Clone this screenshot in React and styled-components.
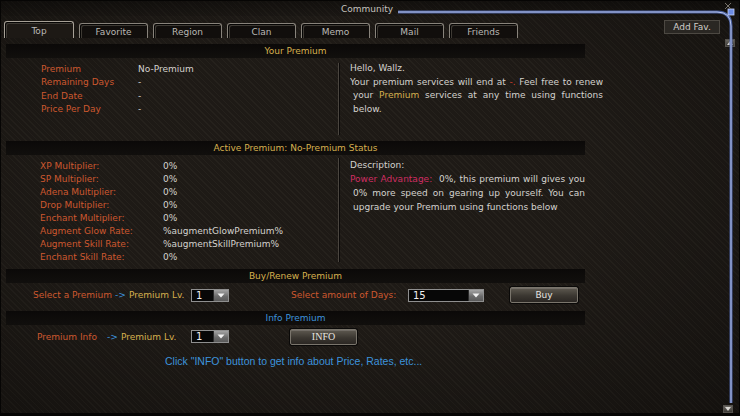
import React from 'react';
import styled, { createGlobalStyle } from 'styled-components';

const GlobalStyle = createGlobalStyle`
  html, body {
    margin: 0;
    padding: 0;
    background: #000;
  }
`;

const colors = {
  label: '#cd582f',
  value: '#d4d2ce',
  gold: '#d6b04e',
  red: '#c83a2a',
  pink: '#d02d62',
  blue: '#3d93dc',
};

const Window = styled.div`
  position: relative;
  width: 740px;
  height: 416px;
  box-sizing: border-box;
  overflow: hidden;
  display: flex;
  flex-direction: column;
  font-family: 'DejaVu Sans', 'Noto Sans', sans-serif;
  font-size: 9px;
  color: ${colors.value};
  border: 1px solid #060504;
  border-bottom-width: 3px;
  background:
    radial-gradient(ellipse at 45% 45%, rgba(0, 0, 0, 0) 45%, rgba(0, 0, 0, 0.35) 100%),
    repeating-linear-gradient(45deg, #1e1a16 0 2px, #25211c 2px 3px, #1e1a16 3px 4px);
`;

const TitleBar = styled.div`
  flex: none;
  height: 15px;
  display: flex;
  align-items: center;
  justify-content: center;
  padding-right: 6px;
  color: #c4c2be;
  background: linear-gradient(rgba(0, 0, 0, 0.35), rgba(0, 0, 0, 0.1));
`;

const TabBar = styled.div`
  flex: none;
  height: 22px;
  display: flex;
  align-items: flex-end;
  gap: 5px;
  padding: 0 19px 0 3px;
`;

const Tab = styled.div`
  width: ${(p) => (p.$active ? 70 : 69)}px;
  height: ${(p) => (p.$active ? 17 : 15)}px;
  box-sizing: border-box;
  border: 1px solid ${(p) => (p.$active ? '#a7a197' : '#88837b')};
  border-bottom: none;
  border-radius: 3px 3px 0 0;
  background: ${(p) => (p.$active ? '#1d1915' : '#110e0c')};
  box-shadow: inset 1px 1px 0 #050403, inset 2px 2px 0 #3e3a34;
  color: #bab8b4;
  display: flex;
  align-items: center;
  justify-content: center;
  padding-top: 1px;
`;

const AddFav = styled.div`
  margin-left: auto;
  align-self: flex-start;
  margin-top: 4px;
  width: 56px;
  height: 14px;
  box-sizing: border-box;
  border: 1px solid #4c4842;
  background: #2a2723;
  color: #cfcdc9;
  display: flex;
  align-items: center;
  justify-content: center;
`;

const Body = styled.div`
  flex: 1;
  display: flex;
  min-height: 0;
`;

const Content = styled.div`
  width: 579px;
  margin-left: 5px;
  padding-top: 6px;
  display: flex;
  flex-direction: column;
`;

const SectionHead = styled.div`
  height: 14px;
  line-height: 14px;
  text-align: center;
  background: linear-gradient(#0b0908, #110f0d);
  color: ${(p) => p.$color || colors.gold};
`;

const InfoBlock = styled.div`
  height: ${(p) => p.$h}px;
  display: grid;
  grid-template-columns: 332px 2px 1fr;
`;

const StatList = styled.div`
  display: grid;
  grid-template-columns: ${(p) => p.$labelW}px 1fr;
  grid-auto-rows: ${(p) => p.$lh}px;
  align-items: center;
  align-content: start;
  padding: ${(p) => p.$top}px 0 0 ${(p) => p.$left}px;
`;

const Label = styled.span`
  color: ${(p) => p.$color || colors.label};
  white-space: nowrap;
`;

const Value = styled.span`
  color: ${colors.value};
  white-space: nowrap;
`;

const Divider = styled.div`
  border-left: 1px solid #4a453f;
  border-right: 1px solid #0b0908;
  margin: ${(p) => p.$top}px 0 ${(p) => p.$bottom}px;
`;

const Para = styled.div`
  padding: ${(p) => p.$top}px 0 0 10px;
  width: ${(p) => p.$w}px;
  line-height: ${(p) => p.$lh}px;
`;

const Line = styled.div`
  white-space: ${(p) => (p.$justify ? 'normal' : 'pre')};
  text-align: ${(p) => (p.$justify ? 'justify' : 'left')};
  text-align-last: ${(p) => (p.$justify ? 'justify' : 'auto')};
  padding-left: ${(p) => p.$indent || 0}px;
  height: ${(p) => p.$lh}px;
  overflow: hidden;
`;

const Tint = styled.span`
  color: ${(p) => p.$color};
`;

const Row = styled.div`
  height: ${(p) => p.$h}px;
  box-sizing: border-box;
  padding-bottom: ${(p) => p.$pb || 0}px;
  display: grid;
  grid-template-columns: ${(p) => p.$cols};
  align-items: center;
`;

const Combo = styled.div`
  width: ${(p) => p.$w}px;
  height: 13px;
  box-sizing: border-box;
  border: 1px solid #8f8f8f;
  background: #070707;
  display: flex;
  align-items: stretch;
  color: #f2f2f2;
  font-size: 10px;
`;

const ComboValue = styled.span`
  flex: 1;
  padding-left: 4px;
  line-height: 11px;
`;

const ComboButton = styled.span`
  width: 14px;
  background: linear-gradient(#a3a3a3, #6a6a6a 60%, #5a5a5a);
  border-left: 1px solid #2a2a2a;
  display: flex;
  align-items: center;
  justify-content: center;
`;

const Button = styled.div`
  width: ${(p) => p.$w}px;
  height: 16px;
  box-sizing: border-box;
  border: 1px solid #7a756c;
  border-radius: 2px;
  background: linear-gradient(#5e5950, #3b3731 55%, #2b2723);
  box-shadow: inset 0 1px 0 rgba(255, 255, 255, 0.14), 0 0 0 1px #0a0908;
  color: #e6e4e0;
  display: flex;
  align-items: center;
  justify-content: center;
  font-family: ${(p) => (p.$serif ? "'Liberation Serif', serif" : 'inherit')};
  font-size: ${(p) => (p.$serif ? 10 : 9)}px;
`;

const Hint = styled.div`
  margin-top: 6px;
  padding-left: 159px;
  line-height: 14px;
  font-family: 'Liberation Sans', Arial, sans-serif;
  font-size: 10.5px;
  color: ${colors.blue};
`;

const Rail = styled.div`
  flex: 1;
  display: flex;
  flex-direction: column;
  align-items: flex-end;
  justify-content: space-between;
  padding: 1px 4px 0 0;
`;

const ScrollButton = styled.div`
  width: 10px;
  height: 8px;
  box-sizing: border-box;
  border: 1px solid #55524d;
  background: linear-gradient(#6a6762, #3a3834);
  display: flex;
  align-items: center;
  justify-content: center;
  margin-right: ${(p) => p.$mr || 0}px;
`;

const Frame = styled.svg`
  position: absolute;
  inset: 0;
  pointer-events: none;
`;

const Chevron = () => (
  <svg width="8" height="5" viewBox="0 0 8 5">
    <path d="M0.5 0.5 H7.5 L4 4.5 Z" fill="#f2f2f2" />
  </svg>
);

const Arrow = ({ up }) => (
  <svg width="6" height="4" viewBox="0 0 6 4">
    <path d={up ? 'M0 4 H6 L3 0 Z' : 'M0 0 H6 L3 4 Z'} fill="#d8d6d2" />
  </svg>
);

const tabs = ['Top', 'Favorite', 'Region', 'Clan', 'Memo', 'Mail', 'Friends'];

const premiumStats = [
  ['Premium', 'No-Premium'],
  ['Remaining Days', '-'],
  ['End Date', '-'],
  ['Price Per Day', '-'],
];

const activeStats = [
  ['XP Multiplier:', '0%'],
  ['SP Multiplier:', '0%'],
  ['Adena Multiplier:', '0%'],
  ['Drop Multiplier:', '0%'],
  ['Enchant Multiplier:', '0%'],
  ['Augment Glow Rate:', '%augmentGlowPremium%'],
  ['Augment Skill Rate:', '%augmentSkillPremium%'],
  ['Enchant Skill Rate:', '0%'],
];

const Select = ({ w, value }) => (
  <Combo $w={w}>
    <ComboValue>{value}</ComboValue>
    <ComboButton>
      <Chevron />
    </ComboButton>
  </Combo>
);

export default function App() {
  return (
    <>
      <GlobalStyle />
      <Window>
        <TitleBar>Community</TitleBar>
        <TabBar>
          {tabs.map((t, i) => (
            <Tab key={t} $active={i === 0}>
              {t}
            </Tab>
          ))}
          <AddFav>Add Fav.</AddFav>
        </TabBar>

        <Body>
          <Content>
            <SectionHead>Your Premium</SectionHead>
            <InfoBlock $h={83}>
              <StatList $labelW={97} $lh={13.5} $top={4} $left={35}>
                {premiumStats.map(([k, v]) => (
                  <React.Fragment key={k}>
                    <Label>{k}</Label>
                    <Value>{v}</Value>
                  </React.Fragment>
                ))}
              </StatList>
              <Divider $top={5} $bottom={6} />
              <Para $top={4} $w={253} $lh={13.7}>
                <Line $lh={13.7}>Hello, Wallz.</Line>
                <Line $lh={13.7} $justify>
                  Your premium services will end at <Tint $color={colors.red}>-.</Tint> Feel free to renew
                </Line>
                <Line $lh={13.7} $justify $indent={3}>
                  your <Tint $color={colors.gold}>Premium</Tint> services at any time using functions
                </Line>
                <Line $lh={13.7} $indent={3}>below.</Line>
              </Para>
            </InfoBlock>

            <SectionHead>Active Premium: No-Premium Status</SectionHead>
            <InfoBlock $h={114}>
              <StatList $labelW={123} $lh={13} $top={4} $left={34}>
                {activeStats.map(([k, v]) => (
                  <React.Fragment key={k}>
                    <Label>{k}</Label>
                    <Value>{v}</Value>
                  </React.Fragment>
                ))}
              </StatList>
              <Divider $top={3} $bottom={7} />
              <Para $top={3} $w={235} $lh={14}>
                <Line $lh={14}>Description:</Line>
                <Line $lh={14} $justify>
                  <Tint $color={colors.pink}>Power Advantage:</Tint>&nbsp; 0%, this premium will gives you
                </Line>
                <Line $lh={14} $justify $indent={3}>
                  0% more speed on gearing up yourself. You can
                </Line>
                <Line $lh={14} $indent={3}>upgrade your Premium using functions below</Line>
              </Para>
            </InfoBlock>

            <SectionHead>Buy/Renew Premium</SectionHead>
            <Row $h={28} $pb={4} $cols="27px 82px 14px 62px 38px 62px 117px 76px 26px 68px">
              <span />
              <Label>Select a Premium</Label>
              <Label $color={colors.blue}>-&gt;</Label>
              <Label $color={colors.gold}>Premium Lv.</Label>
              <Select w={38} value="1" />
              <span />
              <Label>Select amount of Days:</Label>
              <Select w={76} value="15" />
              <span />
              <Button $w={68}>Buy</Button>
            </Row>

            <SectionHead $color={colors.blue}>Info Premium</SectionHead>
            <Row $h={23} $cols="31px 70px 14px 70px 38px 61px 67px">
              <span />
              <Label>Premium Info</Label>
              <Label $color={colors.blue}>-&gt;</Label>
              <Label $color={colors.gold}>Premium Lv.</Label>
              <Select w={38} value="1" />
              <span />
              <Button $w={67} $serif>
                INFO
              </Button>
            </Row>
            <Hint>Click "INFO" button to get info about Price, Rates, etc...</Hint>
          </Content>

          <Rail>
            <ScrollButton>
              <Arrow up />
            </ScrollButton>
            <ScrollButton $mr={2}>
              <Arrow />
            </ScrollButton>
          </Rail>
        </Body>

        <Frame width="740" height="416" viewBox="0 0 740 416">
          <path d="M397 11 H716 Q730 11 730 25 V402" fill="none" stroke="#4a5f9c" strokeWidth="3" />
          <path d="M397 11 H716 Q730 11 730 25 V402" fill="none" stroke="#b9c6ee" strokeWidth="1" />
          <rect x="727" y="8" width="6" height="6" fill="#6d8ce4" stroke="#c4d0f4" strokeWidth="0.8" />
          <path d="M724 2 L730 8 M730 2 L724 8" stroke="#77736c" strokeWidth="1" />
        </Frame>
      </Window>
    </>
  );
}
